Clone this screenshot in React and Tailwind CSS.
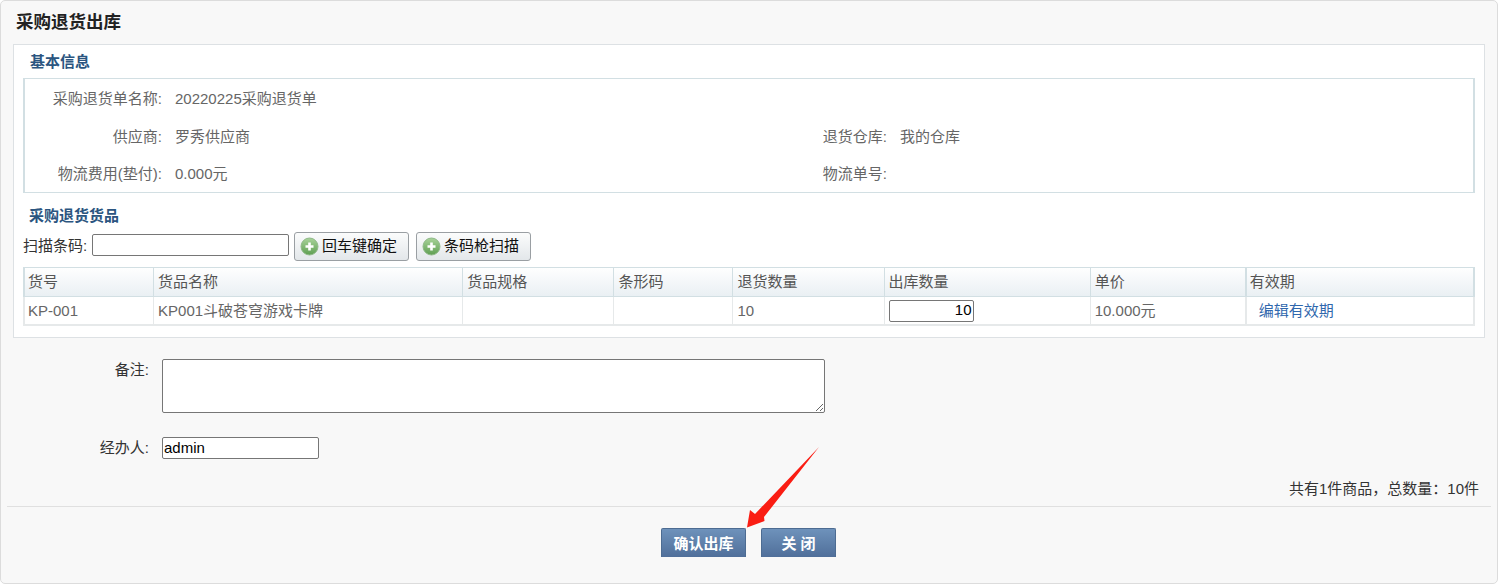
import React from 'react';

const FONT = 'font-["Liberation_Sans","Noto_Sans_CJK_SC",sans-serif]';

const columns = [
  { title: '货号', width: 'w-[131px]', edge: 'border-l-2 pl-[3px]' },
  { title: '货品名称', width: 'w-[309px]', edge: 'pl-[4px]' },
  { title: '货品规格', width: 'w-[151px]', edge: 'pl-[4px]' },
  { title: '条形码', width: 'w-[119px]', edge: 'pl-[4px]' },
  { title: '退货数量', width: 'w-[151px]', edge: 'pl-[4px]' },
  { title: '出库数量', width: 'w-[206px]', edge: 'pl-[4px]' },
  { title: '单价', width: 'w-[154px]', edge: 'pl-[4px] border-r-0' },
  { title: '有效期', width: 'w-[230px]', edge: 'border-l-2 border-r-2 pl-[3px]' },
];

const PlusIcon = () => (
  <svg width="19" height="19" viewBox="0 0 19 19" className="shrink-0">
    <defs>
      <linearGradient id="plusFill" x1="0" y1="0" x2="0" y2="1">
        <stop offset="0" stopColor="#a9d39a" />
        <stop offset="1" stopColor="#5f9f52" />
      </linearGradient>
    </defs>
    <circle cx="9.500" cy="9.500" r="8.500" fill="url(#plusFill)" stroke="#8fb988" strokeWidth="1" />
    <path d="M9.500 5.500v8M5.500 9.500h8" stroke="#fff" strokeWidth="2.600" />
  </svg>
);

const ToolButton = ({ children }) => (
  <button className="flex h-[29px] w-[115px] items-center gap-[3px] rounded-[3px] border border-[#9a9fa3] bg-gradient-to-b from-[#fbfcfc] to-[#e3e7ea] pl-[5px] text-[15px] text-[#111]">
    <PlusIcon />
    <span>{children}</span>
  </button>
);

const InfoRow = ({ label, value, label2, value2, className }) => (
  <div className={`flex items-center text-[15px] text-[#666] ${className}`}>
    <span className="w-[137px] text-right">{label}</span>
    <span className="ml-[13px] w-[622px]">{value}</span>
    {label2 && <span className="w-[90px] text-right">{label2}</span>}
    {value2 && <span className="ml-[13px]">{value2}</span>}
  </div>
);

const Arrow = () => (
  <svg width="90" height="90" viewBox="0 0 90 90" className="absolute left-[740px] top-[442px]">
    <path d="M79 5 L24 75 L24.500 79 L7 85.500 L10 68 L15 72 Z" fill="#fa1d13" />
  </svg>
);

export default function App() {
  return (
    <div className={`relative h-[587px] w-[1499px] bg-white ${FONT}`}>
      <div className="h-[584px] w-[1498px] rounded-[5px] border border-[#dcdcdc] bg-[#f8f8f8] px-[12px]">
        <h1 className="flex h-[43px] items-center pl-[3px] text-[17.500px] font-bold text-[#222]">采购退货出库</h1>

        <div className="h-[294px] w-[1472px] border border-[#dde1e4] bg-white pl-[9px]">
          <h2 className="flex h-[33px] items-center pl-[7px] pt-[2px] text-[15px] font-bold text-[#2b5580]">基本信息</h2>
          <div className="h-[115px] w-[1452px] border-x-2 border-y border-[#d2dfe3] pt-[10px]">
            <InfoRow label="采购退货单名称:" value="20220225采购退货单" className="h-[20px]" />
            <InfoRow
              label="供应商:"
              value="罗秀供应商"
              label2="退货仓库:"
              value2="我的仓库"
              className="mt-[18px] h-[20px]"
            />
            <InfoRow label="物流费用(垫付):" value="0.000元" label2="物流单号:" className="mt-[17px] h-[20px]" />
          </div>

          <h2 className="flex h-[39px] items-center pl-[6px] pt-[8px] text-[15px] font-bold text-[#2b5580]">采购退货货品</h2>

          <div className="flex h-[29px] items-center text-[15px] text-[#333]">
            <label className="w-[69px]">扫描条码:</label>
            <input className="-mt-[3px] h-[22px] w-[197px] rounded-[2px] border border-[#767676] bg-white" />
            <div className="ml-[5px] flex gap-[7px]">
              <ToolButton>回车键确定</ToolButton>
              <ToolButton>条码枪扫描</ToolButton>
            </div>
          </div>

          <table className="mt-[6px] w-[1452px] table-fixed border-separate border-spacing-0 text-[15px] text-[#666]">
            <thead>
              <tr className="h-[30px] bg-gradient-to-b from-white to-[#e9eff3]">
                {columns.map((col) => (
                  <th
                    key={col.title}
                    className={`${col.width} border-y border-r border-[#d2dfe3] text-left font-normal text-[#555] ${col.edge}`}
                  >
                    {col.title}
                  </th>
                ))}
              </tr>
            </thead>
            <tbody>
              <tr className="h-[29px]">
                <td className="border-b-2 border-l-2 border-r border-[#e6e9ea] pl-[3px] pt-[2px]">KP-001</td>
                <td className="border-b-2 border-r border-[#e6e9ea] pl-[4px] pt-[2px]">KP001斗破苍穹游戏卡牌</td>
                <td className="border-b-2 border-r border-[#e6e9ea]"></td>
                <td className="border-b-2 border-r border-[#e6e9ea]"></td>
                <td className="border-b-2 border-r border-[#e6e9ea] pl-[4px] pt-[2px]">10</td>
                <td className="border-b-2 border-r border-[#e6e9ea] pl-[4px]">
                  <input
                    defaultValue="10"
                    className="block h-[22px] w-[85px] rounded-[2px] border border-[#767676] bg-white pr-[1px] text-right text-[15px] text-black"
                  />
                </td>
                <td className="border-b-2 border-[#e6e9ea] pl-[4px] pt-[2px]">10.000元</td>
                <td className="border-x-2 border-b-2 border-[#e6e9ea] pl-[12px] pt-[2px] text-[#2f67ad]">编辑有效期</td>
              </tr>
            </tbody>
          </table>
        </div>

        <div className="mt-[21px] flex text-[15px] text-[#333]">
          <label className="w-[136px] text-right">备注:</label>
          <textarea className="ml-[13px] h-[54px] w-[663px] rounded-[2px] border border-[#767676] bg-white" />
        </div>

        <div className="mt-[24px] flex items-center text-[15px] text-[#333]">
          <label className="w-[136px] text-right">经办人:</label>
          <input
            defaultValue="admin"
            className="ml-[13px] h-[22px] w-[157px] rounded-[2px] border border-[#767676] bg-white pl-[1px] text-[15px] text-black"
          />
        </div>

        <div className="mt-[19px] h-[19px] pr-[6px] text-right text-[15px] leading-[20px] text-[#333]">
          共有1件商品，总数量：10件
        </div>

        <div className="-mx-[6px] mt-[8px] border-t border-[#e0e0e0]" />

        <div className="mt-[21px] flex pl-[648px]">
          <button className="h-[29px] w-[85px] rounded-t-[2px] border-x border-t border-[#4d6c92] bg-gradient-to-b from-[#6e92bb] to-[#506f9a] pt-[4px] text-[15px] font-bold text-white">
            确认出库
          </button>
          <button className="ml-[15px] h-[29px] w-[75px] rounded-t-[2px] border-x border-t border-[#4d6c92] bg-gradient-to-b from-[#6e92bb] to-[#506f9a] pt-[3px] text-[15px] font-bold text-white">
            关 闭
          </button>
        </div>
      </div>
      <Arrow />
    </div>
  );
}
